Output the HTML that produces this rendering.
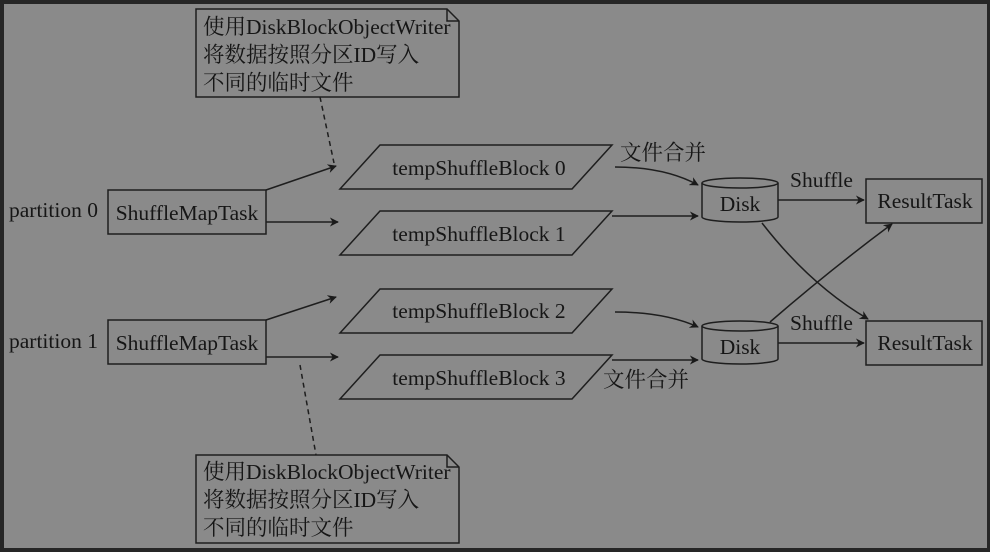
<!DOCTYPE html>
<html><head><meta charset="utf-8"><style>
html,body{margin:0;padding:0;background:#2a2a2a;}
svg{display:block}
text{font-family:"Liberation Serif","Noto Serif CJK SC",serif;fill:#161616;}
</style></head><body>
<svg width="990" height="552" viewBox="0 0 990 552" xmlns="http://www.w3.org/2000/svg">
<defs><marker id="a" viewBox="0 0 10 10" refX="9" refY="5" markerWidth="9" markerHeight="9" orient="auto" markerUnits="userSpaceOnUse"><path d="M0,0 L10,5 L0,10 L3,5 z" fill="#1a1a1a"/></marker></defs>
<rect x="0" y="0" width="990" height="552" fill="#262626"/>
<rect x="4" y="4" width="983" height="544" fill="#8a8a8a"/>
<g stroke="#1e1e1e" stroke-width="1.5" fill="none">
<path d="M196,9 H447 L459,21 V97 H196 Z"/><path d="M447,9 V21 H459"/>
<path d="M196,455 H447 L459,467 V543 H196 Z"/><path d="M447,455 V467 H459"/>
<path d="M320,97 L334,163" stroke-dasharray="5,4"/>
<path d="M300,365 L316,455" stroke-dasharray="5,4"/>
<rect x="108" y="190" width="158" height="44"/>
<rect x="108" y="320" width="158" height="44"/>
<path d="M380,145 H612 L572,189 H340 Z"/>
<path d="M380,211 H612 L572,255 H340 Z"/>
<path d="M380,289 H612 L572,333 H340 Z"/>
<path d="M380,355 H612 L572,399 H340 Z"/>
<rect x="866" y="179" width="116" height="44"/>
<rect x="866" y="321" width="116" height="44"/>
<path d="M702,183 V217 A38,5 0 0 0 778,217 V183"/><ellipse cx="740" cy="183" rx="38" ry="5"/>
<path d="M702,326 V359 A38,5 0 0 0 778,359 V326"/><ellipse cx="740" cy="326" rx="38" ry="5"/>
<g marker-end="url(#a)">
<path d="M266,190 L336,166"/><path d="M266,222 L338,222"/>
<path d="M266,320 L336,297"/><path d="M266,357 L338,357"/>
<path d="M615,167 Q665,167 698,185"/><path d="M612,216 L698,216"/>
<path d="M615,312 Q665,312 698,327"/><path d="M612,360 L698,360"/>
<path d="M778,200 L864,200"/><path d="M778,343 L864,343"/>
<path d="M762,223 Q810,285 868,319"/><path d="M770,322 Q830,270 892,224"/>
</g>
</g>
<g font-size="21.5">
<text x="203" y="34">使用DiskBlockObjectWriter</text>
<text x="203" y="62">将数据按照分区ID写入</text>
<text x="203" y="90">不同的临时文件</text>
<text x="203" y="479">使用DiskBlockObjectWriter</text>
<text x="203" y="507">将数据按照分区ID写入</text>
<text x="203" y="535">不同的临时文件</text>
<text x="9" y="217">partition 0</text>
<text x="9" y="348">partition 1</text>
<text x="187" y="220" text-anchor="middle">ShuffleMapTask</text>
<text x="187" y="350" text-anchor="middle">ShuffleMapTask</text>
<text x="479" y="175" text-anchor="middle">tempShuffleBlock 0</text>
<text x="479" y="241" text-anchor="middle">tempShuffleBlock 1</text>
<text x="479" y="318" text-anchor="middle">tempShuffleBlock 2</text>
<text x="479" y="385" text-anchor="middle">tempShuffleBlock 3</text>
<text x="620" y="160">文件合并</text>
<text x="603" y="387">文件合并</text>
<text x="740" y="211" text-anchor="middle">Disk</text>
<text x="740" y="354" text-anchor="middle">Disk</text>
<text x="790" y="187">Shuffle</text>
<text x="790" y="330">Shuffle</text>
<text x="925" y="208" text-anchor="middle">ResultTask</text>
<text x="925" y="350" text-anchor="middle">ResultTask</text>
</g>
</svg>
</body></html>
